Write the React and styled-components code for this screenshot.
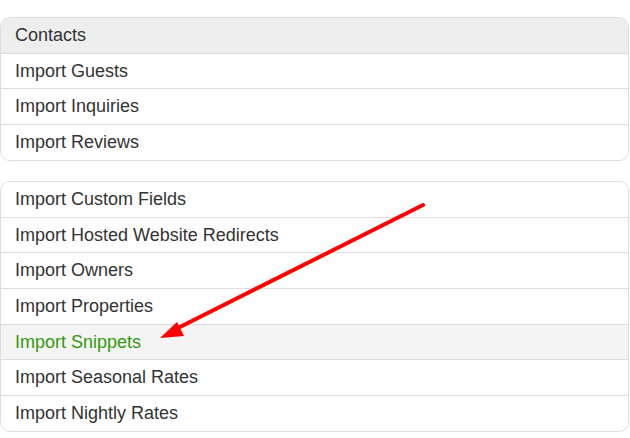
import React from "react";
import styled, { createGlobalStyle } from "styled-components";

const GlobalStyle = createGlobalStyle`
  body {
    margin: 0;
    background: #fff;
    font-family: "Liberation Sans", Arial, sans-serif;
  }
`;

const Page = styled.div`
  position: relative;
  width: 630px;
  height: 438px;
  padding-top: 17px;
  box-sizing: border-box;
  display: flex;
  flex-direction: column;
  gap: 20px;
`;

const Panel = styled.div`
  width: 629px;
  box-sizing: border-box;
  border: 1px solid #dddddd;
  border-radius: 10px;
  overflow: hidden;
  display: flex;
  flex-direction: column;
`;

const Item = styled.div`
  padding: 8px 14px;
  font-size: 18px;
  line-height: 18.7px;
  color: ${({ $active }) => ($active ? "#329a0c" : "#333333")};
  background: ${({ $active, $header }) =>
    $header ? "#eeeeee" : $active ? "#f4f4f4" : "#ffffff"};
  & + & {
    border-top: 1px solid #dddddd;
  }
`;

const Arrow = styled.svg`
  position: absolute;
  left: 0;
  top: 0;
  pointer-events: none;
`;

const contacts = ["Import Guests", "Import Inquiries", "Import Reviews"];

const imports = [
  "Import Custom Fields",
  "Import Hosted Website Redirects",
  "Import Owners",
  "Import Properties",
  "Import Snippets",
  "Import Seasonal Rates",
  "Import Nightly Rates",
];

const App = () => {
  return (
    <>
      <GlobalStyle />
      <Page>
        <Panel>
          <Item $header>Contacts</Item>
          {contacts.map((c) => (
            <Item key={c}>{c}</Item>
          ))}
        </Panel>
        <Panel>
          {imports.map((c) => (
            <Item key={c} $active={c === "Import Snippets"}>
              {c}
            </Item>
          ))}
        </Panel>
        <Arrow width="630" height="438" viewBox="0 0 630 438">
          <line x1="423" y1="205" x2="172" y2="331" stroke="#ff0000" strokeWidth="4" strokeLinecap="round" />
          <polygon points="160,338 177,322 184,336" fill="#ff0000" />
        </Arrow>
      </Page>
    </>
  );
};

export default App;
